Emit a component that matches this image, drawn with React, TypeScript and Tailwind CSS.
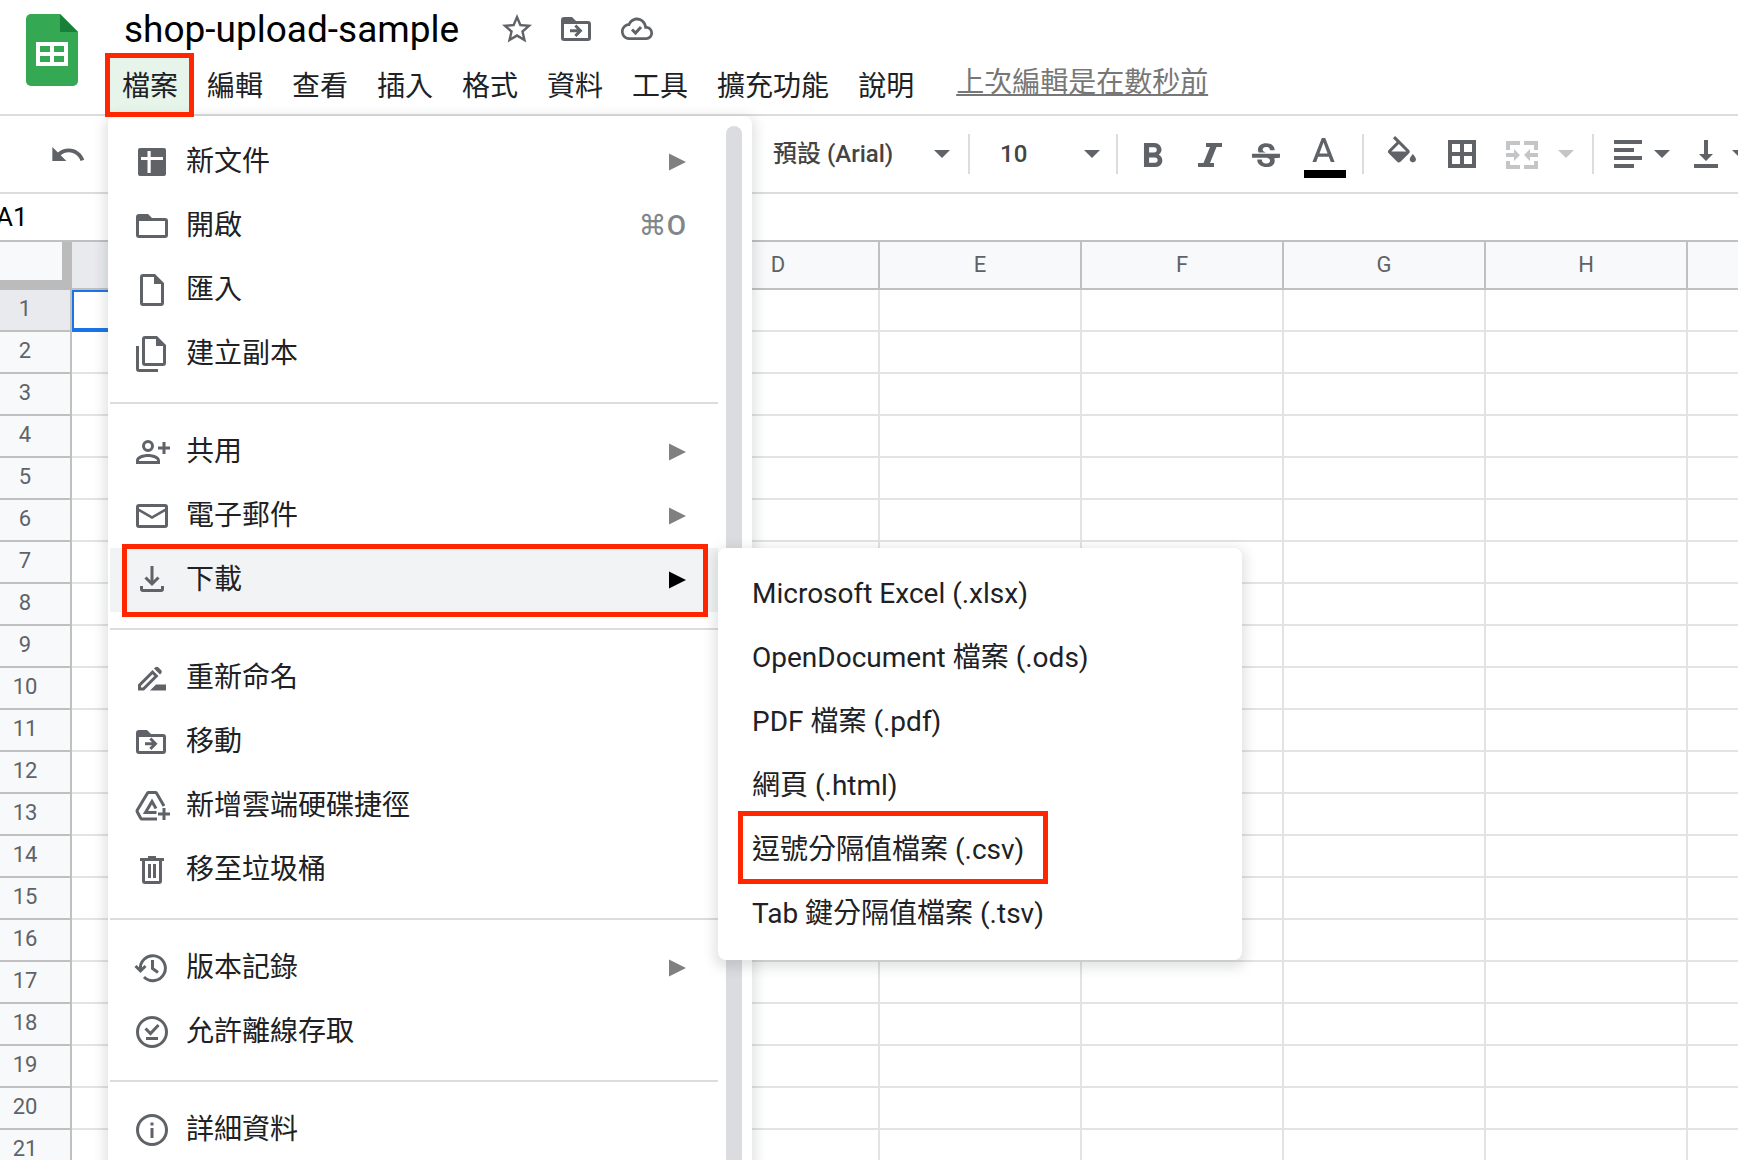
import type { ReactNode } from "react";

const GRAY = "#5f6368";

function Icon({ children, className = "size-9", box = "0 0 36 36", color = GRAY }: { children: ReactNode; className?: string; box?: string; color?: string }) {
  return (
    <svg viewBox={box} className={className + " block shrink-0"} fill={color} fillRule="evenodd" aria-hidden="true">
      {children}
    </svg>
  );
}

const moveFolder = (
  <>
    <path d="M5 6h8l4 4h12a3 3 0 0 1 3 3v14a3 3 0 0 1-3 3H5a3 3 0 0 1-3-3V9a3 3 0 0 1 3-3zM5 13v14h24V13z" />
    <path d="M11 18.300h7l-2.700-2.700 2.100-2.100 6.100 6.200-6.100 6.200-2.100-2.100 2.700-2.600h-7z" />
  </>
);

const icons: Record<string, ReactNode> = {
  new: <path d="M6 4h24a2 2 0 0 1 2 2v24a2 2 0 0 1-2 2H6a2 2 0 0 1-2-2V6a2 2 0 0 1 2-2zM13.500 7v6H7v3h6.500v13h3.200V16H29v-3H16.700V7z" />,
  open: <path d="M5 6h9l4 4h13a3 3 0 0 1 3 3v14a3 3 0 0 1-3 3H5a3 3 0 0 1-3-3V9a3 3 0 0 1 3-3zM5 13v14h26V13z" />,
  file: <path d="M9 2h12l9 9v20a3 3 0 0 1-3 3H9a3 3 0 0 1-3-3V5a3 3 0 0 1 3-3zM9 5v26h18V12h-7V5z" />,
  copy: (
    <>
      <path d="M11 0h12l9 9v18a3 3 0 0 1-3 3H11a3 3 0 0 1-3-3V3a3 3 0 0 1 3-3zM11 3v24h18V10h-7V3z" />
      <path d="M2 10h3v23h19v3H5a3 3 0 0 1-3-3z" />
    </>
  ),
  share: (
    <>
      <path d="M14 6a6 6 0 1 1 0 12 6 6 0 0 1 0-12zm0 3a3 3 0 1 0 0 6 3 3 0 0 0 0-6z" />
      <path d="M14 20c5 0 12 2 12 6.500V30H2v-3.500C2 22 9 20 14 20zm0 3c-4 0-9 1.800-9 3.500v.5h18v-.5c0-1.700-5-3.500-9-3.500z" />
      <path d="M28.500 8h3v4.500H36v3h-4.500V20h-3v-4.500H24v-3h4.500z" />
    </>
  ),
  mail: <path d="M5 6h26a3 3 0 0 1 3 3v18a3 3 0 0 1-3 3H5a3 3 0 0 1-3-3V9a3 3 0 0 1 3-3zM5 9v1.500l13 7.500 13-7.500V9zm0 4.500V27h26V13.500L18 21z" />,
  download: (
    <g fill="none" stroke={GRAY} strokeWidth="3">
      <path d="M18 4v18M11.500 15.500l6.500 6.500 6.500-6.500M7.500 24v3a1.500 1.500 0 0 0 1.500 1.500h18a1.500 1.500 0 0 0 1.500-1.500v-3" />
    </g>
  ),
  rename: (
    <>
      <path d="M4 24.500L18.500 10l6 6L10 30.500H4zM7 25.700v1.800h1.800L20.300 16l-1.800-1.800z" />
      <path d="M20 8.500l1-1c1-1 2.500-1 3.500 0L27 10c1 1 1 2.500 0 3.500l-1 1zM22 24.500h10v6H16z" />
    </>
  ),
  move: moveFolder,
  drive: (
    <>
      <g fill="none" stroke={GRAY} strokeWidth="3" strokeLinejoin="round">
        <path d="M30 18L22.600 5.200a1.500 1.500 0 0 0-1.300-.7h-6.600a1.500 1.500 0 0 0-1.300.7L3.200 22.300a1.500 1.500 0 0 0 0 1.500l3.500 6.500a1.500 1.500 0 0 0 1.300.8H23" />
        <path d="M22.500 24.500H11.500L18 13.500l4 7" strokeLinejoin="miter" />
      </g>
      <path d="M28.500 20h3v4.500H36v3h-4.500V32h-3v-4.500H24v-3h4.500z" />
    </>
  ),
  trash: <path d="M14 4h8v2h8v3h-2v20a3 3 0 0 1-3 3H11a3 3 0 0 1-3-3V9H6V6h8zM11 9v20h14V9zM14 12h3v14h-3zM19 12h3v14h-3z" />,
  history: (
    <g fill="none" stroke={GRAY} strokeWidth="3">
      <path d="M6.500 20A12.500 12.500 0 1 1 10 27M1.500 16l5 5 5-5M18.500 10v8.500l5.500 4" />
    </g>
  ),
  offline: (
    <g fill="none" stroke={GRAY} strokeWidth="3">
      <circle cx="18" cy="18" r="14.500" />
      <path d="M11.500 14.500l5 5 8-8.500M12 24.500h12" />
    </g>
  ),
  info: (
    <>
      <circle cx="18" cy="18" r="14.500" fill="none" stroke={GRAY} strokeWidth="3" />
      <path d="M16.500 10.500h3v3h-3zM16.500 16h3v10h-3z" />
    </>
  ),
};

type Item = { icon: string; label: string; sub?: boolean; keys?: string; active?: boolean };

const groups: Item[][] = [
  [
    { icon: "new", label: "新文件", sub: true },
    { icon: "open", label: "開啟", keys: "⌘O" },
    { icon: "file", label: "匯入" },
    { icon: "copy", label: "建立副本" },
  ],
  [
    { icon: "share", label: "共用", sub: true },
    { icon: "mail", label: "電子郵件", sub: true },
    { icon: "download", label: "下載", sub: true, active: true },
  ],
  [
    { icon: "rename", label: "重新命名" },
    { icon: "move", label: "移動" },
    { icon: "drive", label: "新增雲端硬碟捷徑" },
    { icon: "trash", label: "移至垃圾桶" },
  ],
  [
    { icon: "history", label: "版本記錄", sub: true },
    { icon: "offline", label: "允許離線存取" },
  ],
  [{ icon: "info", label: "詳細資料" }],
];

const formats = [
  "Microsoft Excel (.xlsx)",
  "OpenDocument 檔案 (.ods)",
  "PDF 檔案 (.pdf)",
  "網頁 (.html)",
  "逗號分隔值檔案 (.csv)",
  "Tab 鍵分隔值檔案 (.tsv)",
];

function DownloadMenu() {
  return (
    <div role="menu" aria-label="下載" className="absolute left-full top-0 z-10 w-[524px] rounded-lg bg-white py-3.5 shadow-[0_4px_12px_4px_rgba(60,64,67,0.15)]">
      {formats.map((f) => (
        <div key={f} className="relative">
          <button role="menuitem" className="flex h-16 w-full items-center pl-[34px] text-left whitespace-nowrap">
            {f}
          </button>
          {f.includes(".csv") && <span className="pointer-events-none absolute -top-[7px] left-5 h-[73px] w-[310px] border-5 border-[#ff2600]" />}
        </div>
      ))}
    </div>
  );
}

function FileMenu() {
  return (
    <div role="menu" aria-label="檔案" className="absolute left-0 top-full z-10 mt-0.5 flex w-[644px] justify-between rounded-lg bg-white pl-0.5 pr-2.5 shadow-[0_4px_12px_4px_rgba(60,64,67,0.15)]">
      <div className="w-[608px] py-3.5">
        {groups.map((group, i) => (
          <div key={i}>
            {i > 0 && <div role="separator" className="my-4 h-0.5 bg-[#dadce0]" />}
            {group.map((it) => (
              <div key={it.label} className="relative">
                <button role="menuitem" className={"flex h-16 w-full items-center gap-4 pl-6 pr-8 whitespace-nowrap " + (it.active ? "bg-[#f1f3f4]" : "")}>
                  <Icon>{icons[it.icon]}</Icon>
                  <span className="flex-1 text-left">{it.label}</span>
                  {it.keys && <span className="font-[Roboto,'DejaVu_Sans',sans-serif] font-medium text-[#80868b]">{it.keys}</span>}
                  {it.sub && (
                    <Icon className="size-[18px]" box="0 0 18 18" color={it.active ? "#000" : "#808080"}>
                      <path d="M1 0.500l17 8.500-17 8.500z" />
                    </Icon>
                  )}
                </button>
                {it.active && <span className="pointer-events-none absolute -top-1 left-3 h-[73px] w-[586px] border-5 border-[#ff2600]" />}
                {it.active && <DownloadMenu />}
              </div>
            ))}
          </div>
        ))}
      </div>
      <div className="mt-2.5 w-4 rounded-full bg-[#dadce0]" />
    </div>
  );
}

const menus = ["編輯", "查看", "插入", "格式", "資料", "工具", "擴充功能", "說明"];

function Header() {
  return (
    <header className="flex h-[116px] shrink-0 border-b-2 border-[#dadce0] pl-[26px]">
      <svg viewBox="0 0 52 72" className="mt-3.5 h-[72px] w-[52px] shrink-0" aria-label="Sheets" role="img">
        <path d="M5 0h29l18 18v49a5 5 0 0 1-5 5H5a5 5 0 0 1-5-5V5a5 5 0 0 1 5-5z" fill="#34a853" />
        <path d="M34 0l18 18H34z" fill="#188038" />
        <path d="M10 28h32v24H10zM14 32v6h10v-6zM28 32v6h10v-6zM14 42v6h10v-6zM28 42v6h10v-6z" fill="#fff" fillRule="evenodd" />
      </svg>
      <div className="ml-[30px] flex flex-col">
        <div className="flex h-[58px] items-center pl-4">
          <h1 className="pt-0.5 text-[37px] leading-[56px] text-black">shop-upload-sample</h1>
          <div className="ml-10 flex items-center gap-6">
            <button aria-label="加上星號">
              <Icon box="0 0 24 24">
                <path d="M22 9.240l-7.190-.62L12 2 9.190 8.630 2 9.240l5.460 4.730L5.820 21 12 17.270 18.180 21l-1.630-7.030L22 9.240zM12 15.400l-3.760 2.270 1-4.280-3.320-2.880 4.380-.38L12 6.100l1.710 4.040 4.380.38-3.320 2.880 1 4.280L12 15.400z" />
              </Icon>
            </button>
            <button aria-label="移動">
              <Icon>{moveFolder}</Icon>
            </button>
            <button aria-label="查看文件狀態">
              <Icon>
                <path transform="translate(2 1) scale(1.333 1.400)" d="M19.350 10.040C18.670 6.590 15.640 4 12 4 9.110 4 6.610 5.640 5.360 8.040 2.350 8.360 0 10.900 0 14c0 3.310 2.690 6 6 6h13c2.760 0 5-2.240 5-5 0-2.640-2.050-4.780-4.650-4.960zM19 18H6c-2.210 0-4-1.790-4-4s1.790-4 4-4h.71C7.370 7.690 9.480 6 12 6c3.040 0 5.500 2.460 5.500 5.500v.5H19c1.660 0 3 1.340 3 3s-1.340 3-3 3z" />
                <path d="M13 18.500l3.500 3.500 5.500-6" fill="none" stroke={GRAY} strokeWidth="3" />
              </Icon>
            </button>
          </div>
        </div>
        <nav className="flex gap-px text-[28px] leading-[54px] whitespace-nowrap text-[#202124]">
          <div className="relative">
            <button className="block h-14 bg-[#e6f4ea] px-3.5 pt-0.5">檔案</button>
            <FileMenu />
            <span className="pointer-events-none absolute -top-[5px] -left-[3px] z-20 h-16 w-[89px] border-5 border-[#ff2600]" />
          </div>
          {menus.map((m) => (
            <button key={m} className="block h-14 px-3.5 pt-0.5">
              {m}
            </button>
          ))}
          <a href="#history" className="ml-[27px] leading-[50px] text-[#777] underline">
            上次編輯是在數秒前
          </a>
        </nav>
      </div>
    </header>
  );
}

function Caret({ color = GRAY }: { color?: string }) {
  return (
    <Icon className="h-2 w-4" box="0 0 16 8" color={color}>
      <path d="M0 0h16L8 8z" />
    </Icon>
  );
}

function Separator() {
  return <span className="h-10 w-0.5 shrink-0 bg-[#dadce0]" />;
}

function ToolButton({ label, children }: { label: string; children: ReactNode }) {
  return (
    <button aria-label={label} className="shrink-0">
      {children}
    </button>
  );
}

function Picker({ label, value, className }: { label: string; value: string; className: string }) {
  return (
    <div className={"relative flex shrink-0 items-center " + className}>
      <select aria-label={label} className="w-full appearance-none bg-transparent text-[24px] font-medium text-[#444]">
        <option>{value}</option>
      </select>
      <span className="pointer-events-none absolute right-0">
        <Caret />
      </span>
    </div>
  );
}

function Toolbar() {
  return (
    <div role="toolbar" className="flex h-[78px] shrink-0 items-center border-b-2 border-[#dadce0] pl-[50px]">
      <ToolButton label="復原">
        <Icon box="0.500 0 23.100 23.100">
          <path d="M12.500 8c-2.650 0-5.050.99-6.900 2.600L2 7v9h9l-3.620-3.620c1.390-1.160 3.160-1.880 5.120-1.880 3.540 0 6.550 2.310 7.600 5.500l2.370-.78C21.080 11.030 17.150 8 12.500 8z" />
        </Icon>
      </ToolButton>
      <Picker label="字型" value="預設 (Arial)" className="ml-[687px] mr-[18px] w-[177px]" />
      <Separator />
      <Picker label="字型大小" value="10" className="ml-[30px] mr-4 w-[100px]" />
      <Separator />
      <div className="ml-[18px] mr-4 flex shrink-0 items-center gap-5">
        <ToolButton label="粗體">
          <Icon>
            <path transform="translate(-4 0.200) scale(1.710)" d="M15.600 10.790c.97-.67 1.650-1.770 1.650-2.790 0-2.260-1.750-4-4-4H7v14h7.040c2.090 0 3.710-1.700 3.710-3.790 0-1.520-.86-2.820-2.150-3.420zM10 6.500h3c.83 0 1.500.67 1.500 1.500s-.67 1.500-1.500 1.500h-3v-3zm3.500 9H10v-3h3.500c.83 0 1.500.67 1.500 1.500s-.67 1.500-1.500 1.500z" />
          </Icon>
        </ToolButton>
        <ToolButton label="斜體">
          <Icon>
            <path d="M14 7h16v4h-5.500l-6.500 16h4v4H6v-4h5.500L18 11h-4z" />
          </Icon>
        </ToolButton>
        <ToolButton label="刪除線">
          <Icon>
            <path transform="translate(-0.700 2.600) scale(1.556)" d="M7.240 8.750c-.26-.48-.39-1.030-.39-1.670 0-.61.13-1.160.4-1.670.26-.5.63-.93 1.110-1.290.48-.35 1.050-.63 1.700-.83.66-.19 1.390-.29 2.180-.29.81 0 1.540.11 2.210.34.66.22 1.230.54 1.690.94.47.4.83.88 1.080 1.430.25.55.38 1.150.38 1.810h-3.010c0-.31-.05-.59-.15-.85-.09-.27-.24-.49-.44-.68-.2-.19-.45-.33-.75-.44-.3-.1-.66-.16-1.060-.16-.39 0-.74.04-1.030.13-.29.09-.53.21-.72.36-.19.16-.34.34-.44.55-.1.21-.15.43-.15.66 0 .48.25.88.74 1.210.38.25.77.48 1.410.7H7.390c-.05-.08-.11-.17-.15-.25zM21 12.300V9.700H3v2.600h9.620c.18.07.4.14.55.2.37.17.66.34.87.51.21.17.35.36.43.57.07.2.11.43.11.69 0 .23-.05.45-.14.66-.09.2-.23.38-.42.53-.19.15-.42.26-.71.35-.29.08-.63.13-1.010.13-.43 0-.83-.04-1.180-.13s-.66-.23-.91-.42c-.25-.19-.45-.44-.59-.75-.14-.31-.25-.76-.25-1.210H6.400c0 .55.08 1.130.24 1.580.16.45.37.85.65 1.210.28.35.6.66.98.92.37.26.78.48 1.220.65.44.17.9.3 1.380.39.48.08.96.13 1.440.13.8 0 1.530-.09 2.180-.28s1.210-.45 1.670-.79c.46-.34.82-.77 1.070-1.270s.38-1.070.38-1.710c0-.6-.1-1.140-.31-1.610z" />
          </Icon>
        </ToolButton>
        <ToolButton label="文字顏色">
          <Icon className="h-[50px] w-[42px]" box="0 -8 42 50">
            <path transform="translate(-1 -4.100) scale(1.710)" d="M11 3L5.500 17h2.250l1.120-3h6.250l1.120 3h2.250L13 3h-2zm-1.380 9L12 5.670 14.380 12H9.620z" />
            <path d="M0 33h42v8H0z" fill="#000" />
          </Icon>
        </ToolButton>
      </div>
      <Separator />
      <div className="ml-5 mr-[18px] flex shrink-0 items-center gap-6">
        <ToolButton label="填滿顏色">
          <Icon>
            <path transform="translate(-0.700 0) scale(1.556)" d="M16.560 8.940L7.620 0 6.210 1.410l2.380 2.380-5.150 5.150c-.59.59-.59 1.540 0 2.120l5.500 5.500c.29.29.68.44 1.060.44s.77-.15 1.060-.44l5.500-5.500c.59-.58.59-1.530 0-2.120zM5.210 10L10 5.210 14.790 10H5.210zM19 11.500s-2 2.170-2 3.500c0 1.100.9 2 2 2s2-.9 2-2c0-1.330-2-3.500-2-3.500z" />
          </Icon>
        </ToolButton>
        <ToolButton label="框線">
          <Icon>
            <path d="M4 4h28v28H4zM8 8v8h8V8zM20 8v8h8V8zM8 20v8h8v-8zM20 20v8h8v-8z" />
          </Icon>
        </ToolButton>
        <div className="flex items-center gap-[18px]">
          <ToolButton label="合併儲存格">
            <Icon box="-2 -5 36 36" color="#c4c5c7">
              <path d="M0 0h14v4H4v5H0zM18 0h14v9h-4V4H18zM0 20h4v4h10v4H0zM28 20h4v8H18v-4h10zM0 12h8V8l6 6-6 6v-4H0zM32 12h-8V8l-6 6 6 6v-4h8z" />
            </Icon>
          </ToolButton>
          <ToolButton label="選取合併類型">
            <Caret color="#c4c5c7" />
          </ToolButton>
        </div>
      </div>
      <Separator />
      <div className="ml-4 flex shrink-0 items-center gap-2">
        <ToolButton label="水平對齊">
          <Icon>
            <path d="M4 4h28v4H4zM4 12h20v4H4zM4 20h28v4H4zM4 28h20v4H4z" />
          </Icon>
        </ToolButton>
        <ToolButton label="水平對齊選項">
          <Caret />
        </ToolButton>
      </div>
      <div className="ml-[18px] flex shrink-0 items-center gap-2">
        <ToolButton label="垂直對齊">
          <Icon>
            <path d="M16 4h4v14h5l-7 7-7-7h5zM6 28h24v4H6z" />
          </Icon>
        </ToolButton>
        <ToolButton label="垂直對齊選項">
          <Caret />
        </ToolButton>
      </div>
    </div>
  );
}

const columns = ["A", "B", "C", "D", "E", "F", "G", "H", ""];
const rows = Array.from({ length: 21 }, (_, i) => i + 1);

function Sheet() {
  return (
    <table className="w-[1890px] table-fixed border-separate border-spacing-0 text-[22px] leading-[26px] text-[#5f6368]">
      <thead>
        <tr className="h-12">
          <th className="w-[72px] border-r-10 border-b-10 border-[#bbb] bg-[#f8f9fa]" />
          {columns.map((c) => (
            <th key={c} className={"border-r-2 border-b-2 border-[#c0c0c0] p-0 font-normal " + (c === "A" ? "bg-[#e8eaed]" : "bg-[#f8f9fa]")}>
              {c}
            </th>
          ))}
        </tr>
      </thead>
      <tbody>
        {rows.map((r) => (
          <tr key={r} className="h-[42px]">
            <th className={"border-r-2 border-b-2 border-[#c0c0c0] p-0 pr-5 pb-0.5 font-normal " + (r === 1 ? "bg-[#e8eaed]" : "bg-[#f8f9fa]")}>{r}</th>
            {columns.map((c) => (
              <td key={c} className={c === "A" && r === 1 ? "border-2 border-b-4 border-[#1a73e8] p-0" : "border-r-2 border-b-2 border-[#e2e3e3] p-0"} />
            ))}
          </tr>
        ))}
      </tbody>
    </table>
  );
}

export default function App() {
  return (
    <div className="flex h-screen flex-col overflow-hidden bg-white font-[Roboto,'Noto_Sans_CJK_TC',sans-serif] text-[28px] text-[#202124]">
      <Header />
      <Toolbar />
      <div className="flex h-12 shrink-0 items-center border-b-2 border-[#c0c0c0]">
        <input aria-label="名稱方塊" defaultValue="A1" className="-ml-1 w-24 bg-transparent text-[26px] text-black outline-none" />
      </div>
      <main className="min-h-0 flex-1 overflow-hidden">
        <Sheet />
      </main>
    </div>
  );
}
